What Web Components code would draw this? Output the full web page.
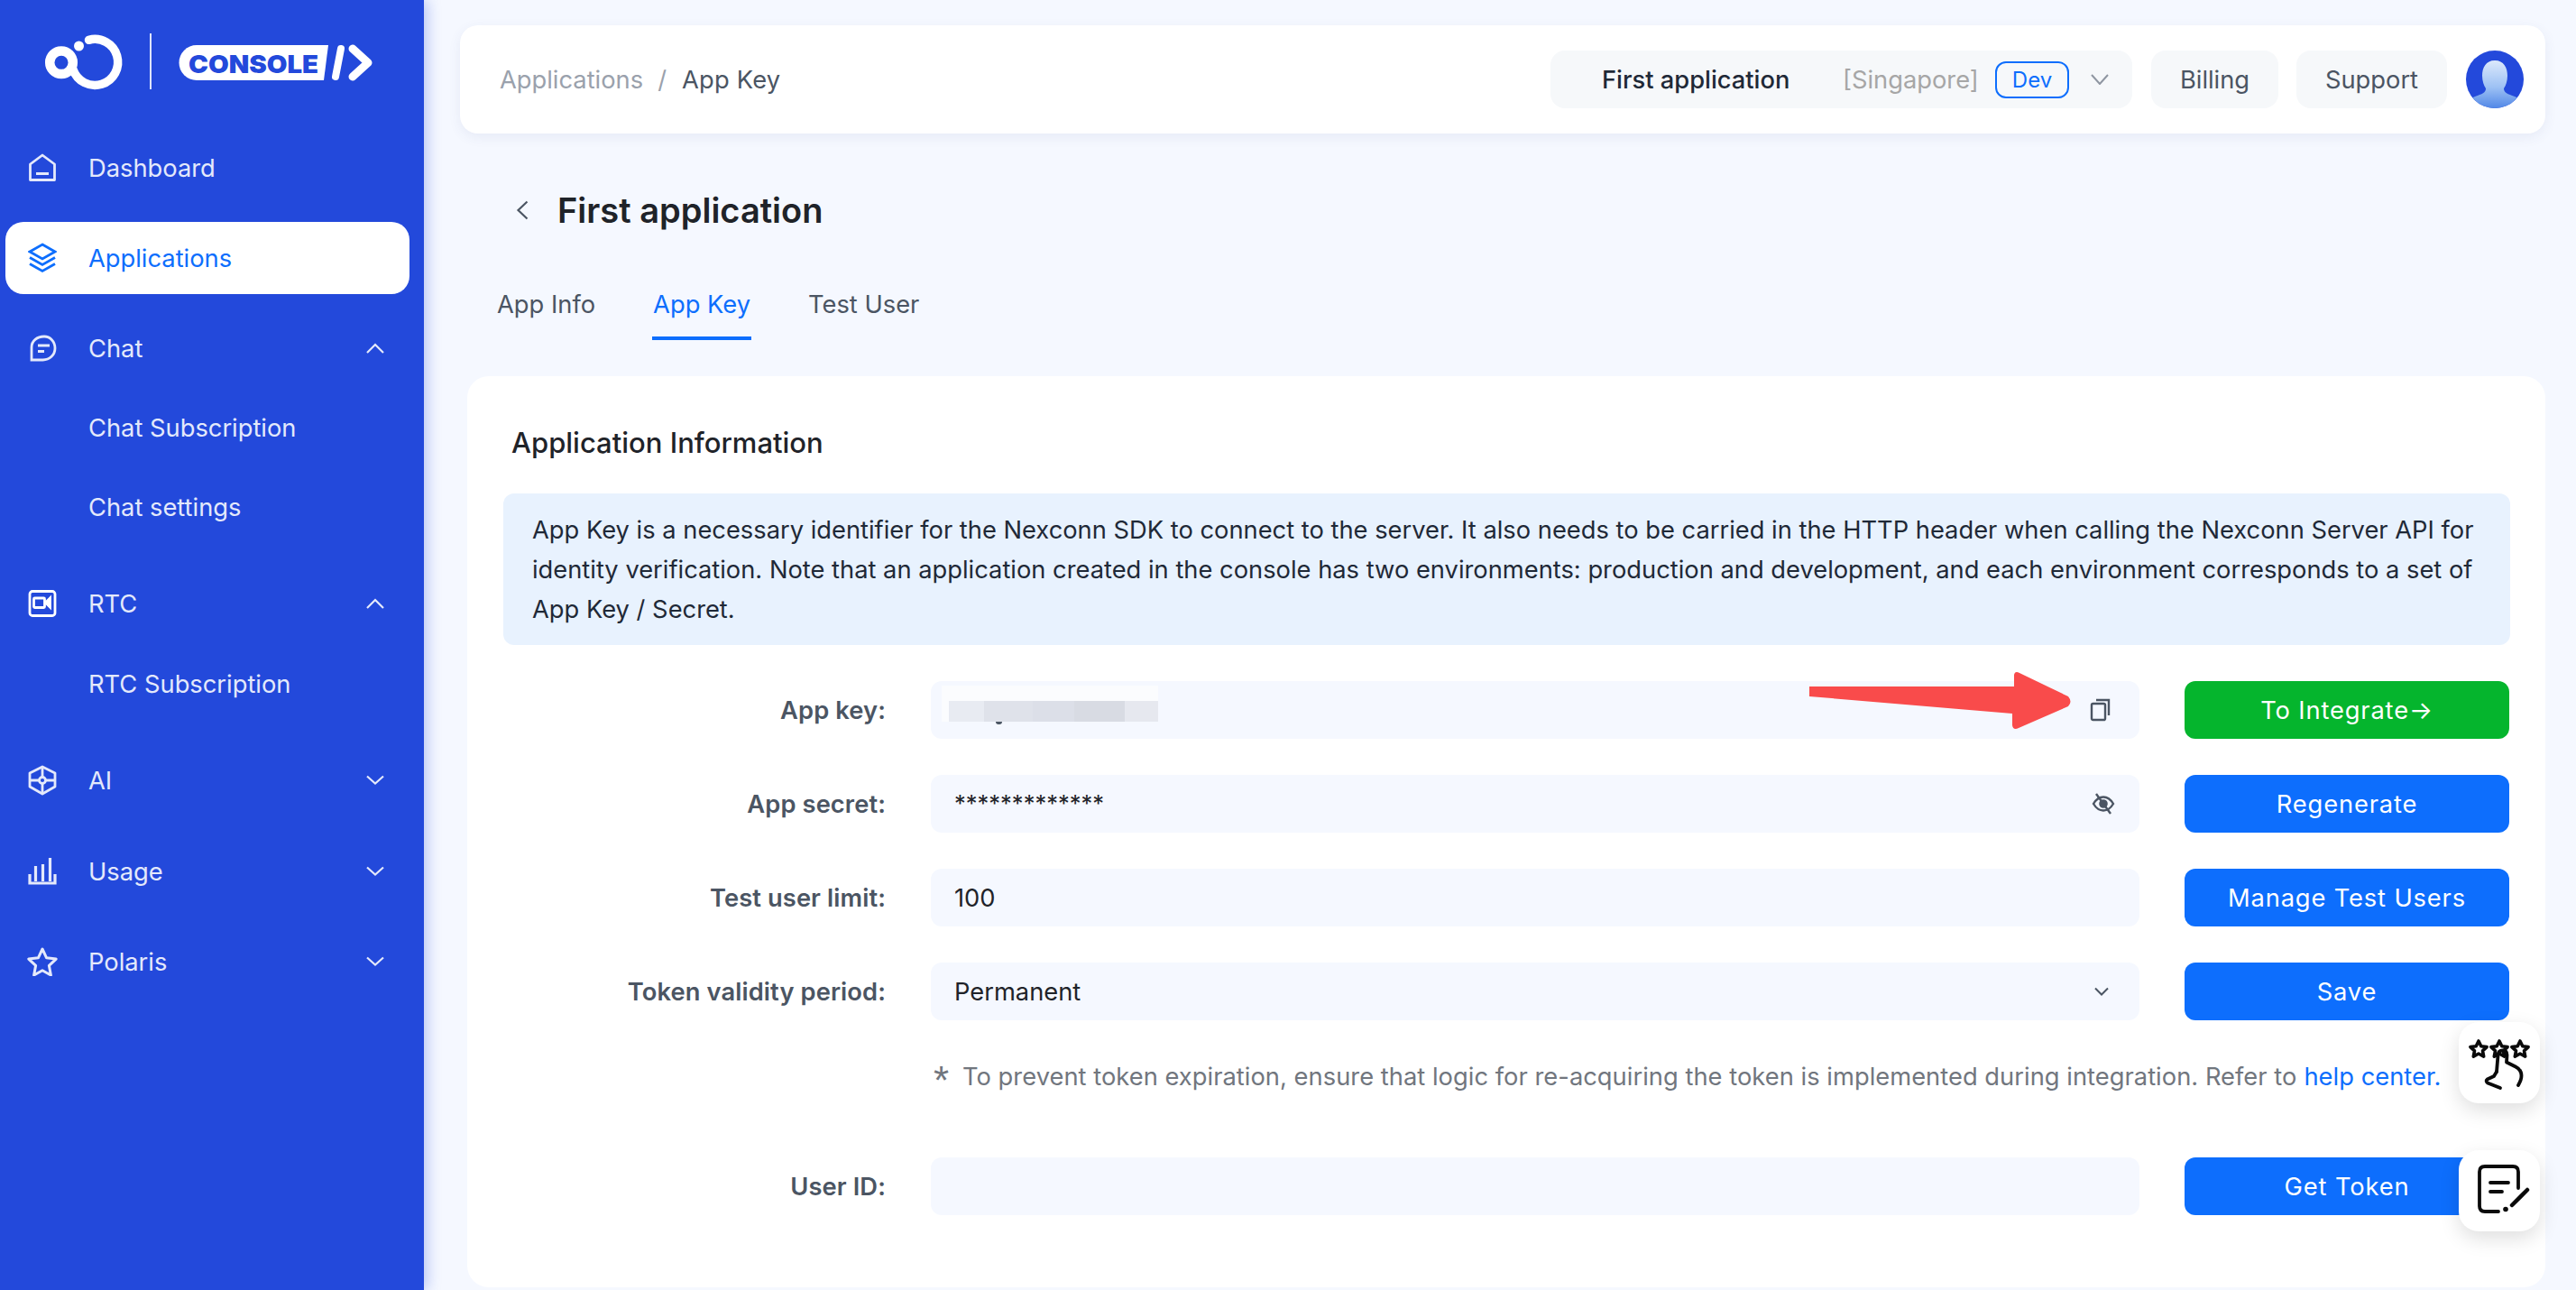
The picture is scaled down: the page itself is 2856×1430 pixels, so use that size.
<!DOCTYPE html>
<html lang="en">
<head>
<meta charset="utf-8">
<title>Console</title>
<style>
  html, body { margin: 0; height: 100%; }
  body { background: #f5f8ff; font-family: Inter, "Liberation Sans", sans-serif; overflow: hidden; }
</style>
</head>
<body>
<app-shell>
  <side-bar slot="side"></side-bar>
  <top-bar></top-bar>
  <page-head title-text="First application"></page-head>
  <tab-bar></tab-bar>
  <info-card heading="Application Information">
    <span slot="notice">App Key is a necessary identifier for the Nexconn SDK to connect to the server. It also needs to be carried in the HTTP header when calling the Nexconn Server API for identity verification. Note that an application created in the console has two environments: production and development, and each environment corresponds to a set of App Key / Secret.</span>

    <form-row label="App key:">
      <field-box>
        <redact-mask></redact-mask>
        <svg slot="end" width="24" height="26" viewBox="0 0 24 26" fill="none" stroke="#4b5563" stroke-width="2.400"><rect x="2" y="6" width="15" height="18" rx="1.600"/><path d="M7 2h14v17"/></svg>
      </field-box>
      <ui-button slot="action" kind="green">To Integrate→</ui-button>
    </form-row>

    <form-row label="App secret:">
      <field-box><span class="stars">*************</span>
        <svg slot="end" width="26" height="26" viewBox="0 0 26 26" fill="none" stroke="#4b5563" stroke-width="2.400" style="margin-right:-4px"><path d="M2 13c3-5 7-7.500 11-7.500S21 8 24 13c-3 5-7 7.500-11 7.500S5 18 2 13z"/><circle cx="13" cy="13" r="3.600" fill="#4b5563"/><path d="M5 2l16 22"/></svg>
      </field-box>
      <ui-button slot="action">Regenerate</ui-button>
    </form-row>

    <form-row label="Test user limit:">
      <field-box>100</field-box>
      <ui-button slot="action">Manage Test Users</ui-button>
    </form-row>

    <form-row label="Token validity period:">
      <field-box>Permanent
        <svg slot="end" width="20" height="12" viewBox="0 0 20 12" fill="none" stroke="#4b5563" stroke-width="2" style="margin-right:1px"><path d="M3 2.500l7 7 7-7"/></svg>
      </field-box>
      <ui-button slot="action">Save</ui-button>
    </form-row>

    <hint-line>To prevent token expiration, ensure that logic for re-acquiring the token is implemented during integration. Refer to <a slot="link">help center.</a></hint-line>

    <form-row label="User ID:">
      <field-box></field-box>
      <ui-button slot="action">Get Token</ui-button>
    </form-row>
  </info-card>
  <red-arrow></red-arrow>
  <float-button style="top:1133px">
    <svg width="90" height="90" viewBox="0 0 90 90" fill="none" stroke="#0a0a0a" stroke-width="3.600" stroke-linecap="round" stroke-linejoin="round">
      <path d="M22 21l2.800 5.800 6.300.8-4.600 4.300 1.200 6.200-5.700-3.100-5.700 3.100 1.200-6.200-4.600-4.300 6.300-.8z"/>
      <path d="M45 21l2.800 5.800 6.300.8-4.600 4.300 1.200 6.200-5.700-3.100-5.700 3.100 1.200-6.200-4.600-4.300 6.300-.8z"/>
      <path d="M68 21l2.800 5.800 6.300.8-4.600 4.300 1.200 6.200-5.700-3.100-5.700 3.100 1.200-6.200-4.600-4.300 6.300-.8z"/>
      <path d="M42 55l1.500-18c.3-4 2-5.500 5-5.500s5 1.800 5 5l-.5 8 10 5c4 2 6.500 6 6.500 10 0 4-1.500 7-3.500 10.500" stroke-width="3.800"/>
      <path d="M42 55l-3 5-7.500 3.500c-1.500 1-1 3 .5 4L46 73" stroke-width="3.800"/>
    </svg>
  </float-button>
  <float-button style="top:1275px">
    <svg width="90" height="90" viewBox="0 0 90 90" fill="none" stroke="#0a0a0a" stroke-width="3.800" stroke-linecap="round" stroke-linejoin="round">
      <path d="M66 42V24q0-6-6-6H29q-6 0-6 6v38q0 6 6 6h15"/>
      <path d="M35 36h20M35 46h13"/>
      <circle cx="52" cy="65.500" r="2.800" fill="#0a0a0a" stroke="none"/>
      <path d="M59 61l17-17" stroke-width="4.500"/>
    </svg>
  </float-button>
</app-shell>

<script>
const make = (html) => { const t = document.createElement('template'); t.innerHTML = html; return t; };

class Base extends HTMLElement {
  constructor() {
    super();
    this.attachShadow({ mode: 'open' });
    this.shadowRoot.appendChild(this.constructor.tpl.content.cloneNode(true));
  }
}

class AppShell extends Base {
  static tpl = make(`
    <style>
      :host { display: flex; position: relative; width: 2856px; height: 1430px; overflow: hidden; }
      .main { flex: 1; min-width: 0; padding: 28px 34px 0 40px; display: flex; flex-direction: column; }
    </style>
    <slot name="side"></slot>
    <div class="main"><slot></slot></div>
  `);
}

class SideBar extends Base {
  static tpl = make(`
    <style>
      :host { display: block; flex: 0 0 470px; height: 1430px; background: #2349db; box-shadow: 4px 0 14px rgba(35,73,219,.28); position: relative; z-index: 2; }
      .logo { height: 146px; display: block; }
      .logo svg { display: block; }
      nav { display: flex; flex-direction: column; }
      .g20 { margin-top: 20px; }
      .g4 { margin-top: 4px; }
      .g23 { margin-top: 23px; }
      .g5 { margin-top: 5px; }
    </style>
    <div class="logo">
      <svg width="470" height="146" viewBox="0 0 470 146">
        <circle cx="68" cy="69.300" r="12.800" fill="none" stroke="#fff" stroke-width="10.500"/>
        <path d="M98.500 44.300A25.500 25.500 0 1 1 81 77" fill="none" stroke="#fff" stroke-width="9.500" stroke-linecap="round"/>
        <circle cx="87.500" cy="51" r="5.500" fill="#fff"/>
        <rect x="166" y="37" width="2" height="62" fill="#fff" opacity=".85"/>
        <path d="M218 50H364l-5 39H218a19.500 19.500 0 0 1 0-39z" fill="#fff"/>
        <text x="209" y="80.500" font-family="Inter, 'Liberation Sans', sans-serif" font-weight="900" font-size="27.500" fill="#2349db" textLength="144" lengthAdjust="spacingAndGlyphs">CONSOLE</text>
        <path d="M378 54l-6 31" stroke="#fff" stroke-width="8" stroke-linecap="round" fill="none"/>
        <path d="M391 54l17 15.500-17 15.500" stroke="#fff" stroke-width="9" stroke-linecap="round" stroke-linejoin="round" fill="none"/>
      </svg>
    </div>
    <nav>
      <nav-item label="Dashboard">
        <svg width="32" height="32" viewBox="0 0 32 32" fill="none" stroke="currentColor" stroke-width="2.800"><path d="M2.500 12L16 2l13.500 10v17.500h-27z" stroke-linejoin="round"/><path d="M9 22.500h14" stroke-width="3"/></svg>
      </nav-item>
      <nav-item class="g20" label="Applications" active>
        <svg width="32" height="34" viewBox="0 0 32 34" fill="none" stroke="currentColor" stroke-width="2.800"><path d="M16 2L30 10 16 18 2 10z"/><path d="M2 16.500l14 8 14-8"/><path d="M2 23.500l14 8 14-8"/></svg>
      </nav-item>
      <nav-item class="g20" label="Chat" arrow="up">
        <svg width="32" height="32" viewBox="0 0 32 32" fill="none" stroke="currentColor" stroke-width="2.800"><path d="M18 3c6.500 0 12 5.500 12 13s-6 13-13.500 13H4V15C4 8 10 3 18 3z"/><path d="M11 13h13M11 19.500h7"/></svg>
      </nav-item>
      <div class="g4">
        <nav-sub>Chat Subscription</nav-sub>
        <nav-sub>Chat settings</nav-sub>
      </div>
      <nav-item class="g23" label="RTC" arrow="up">
        <svg width="32" height="32" viewBox="0 0 32 32" fill="none" stroke="#fff" stroke-width="2.800"><rect x="2" y="2.500" width="28" height="27" rx="3"/><rect x="6.500" y="10" width="12" height="10.500" rx="1"/><path d="M24.500 10l-5 5 5 5z" fill="#fff"/></svg>
      </nav-item>
      <div class="g5"><nav-sub>RTC Subscription</nav-sub></div>
      <nav-item class="g23" label="AI" arrow="down">
        <svg width="32" height="34" viewBox="0 0 32 34" fill="none" stroke="currentColor" stroke-width="2.800"><path d="M16 2l14 7v15l-14 8-14-8V9z" stroke-linejoin="round"/><circle cx="16" cy="17" r="3.500"/><path d="M16 2v11M16 21v11M2 17h10M20 17h10"/></svg>
      </nav-item>
      <nav-item class="g20" label="Usage" arrow="down" style="margin-top:21px">
        <svg width="32" height="32" viewBox="0 0 32 32" fill="none" stroke="currentColor" stroke-width="3.200"><path d="M2 19v10h28v-10"/><path d="M8.500 10v17M16.500 8v19M24.500 1v26"/></svg>
      </nav-item>
      <nav-item class="g20" label="Polaris" arrow="down">
        <svg width="34" height="32" viewBox="0 0 34 32" fill="none" stroke="currentColor" stroke-width="3" stroke-linejoin="round" style="margin-left:-1px;margin-right:-1px"><path d="M17 2l4.600 9.800 10.600 1.300-7.800 7.300 2 10.600-9.400-5.300-9.400 5.300 2-10.600L1.800 13.100l10.600-1.300z"/></svg>
      </nav-item>
    </nav>
  `);
}

class NavItem extends HTMLElement {
  constructor() {
    super();
    this.attachShadow({ mode: 'open' }).innerHTML = `
      <style>
        :host { display: flex; align-items: center; margin-left: 6px; width: 448px; height: 80px; box-sizing: border-box; padding: 0 28px 0 25px; border-radius: 20px; color: #e4e9fb; font-size: 27.300px; }
        :host([active]) { background: #fff; color: #0d6efd; }
        .ic { flex: 0 0 32px; width: 32px; height: 34px; display: flex; align-items: center; justify-content: center; margin-right: 35px; }
        .tx { flex: 1; }
        svg.ch { display: block; }
      </style>
      <span class="ic"><slot></slot></span>
      <span class="tx">${this.getAttribute('label')}</span>
      ${this.hasAttribute('arrow') ? `<svg class="ch" width="20" height="12" viewBox="0 0 20 12" fill="none" stroke="currentColor" stroke-width="2.200"><path d="${this.getAttribute('arrow') === 'up' ? 'M1 11l9-9 9 9' : 'M1 1.500l9 8 9-8'}"/></svg>` : ''}
    `;
  }
}

class NavSub extends Base {
  static tpl = make(`
    <style>:host { display: flex; align-items: center; height: 88px; padding-left: 98px; color: #e4e9fb; font-size: 27.300px; }</style>
    <slot></slot>
  `);
}

class TopBar extends Base {
  static tpl = make(`
    <style>
      :host { display: flex; align-items: center; height: 120px; box-sizing: border-box; padding: 0 24px 0 44px; background: #fff; border-radius: 20px; box-shadow: 0 4px 14px rgba(60,80,140,.08); font-size: 27.300px; flex: none; }
      .crumb { flex: 1; color: #9aa1ac; }
      .crumb .sep { margin: 0 17px 0 16px; color: #9aa1ac; }
      .crumb b { font-weight: 400; color: #4b5563; letter-spacing: .2px; }
      .pill { display: flex; align-items: center; justify-content: center; height: 64px; background: #f6f8fa; border-radius: 16px; color: #4b5563; }
      .app { width: 645px; box-sizing: border-box; justify-content: flex-start; margin-right: 21px; padding-left: 57px; }
      .app .name { width: 267px; color: #1f2937; font-weight: 500; }
      .app .reg { width: 169px; color: #a6a6a6; }
      .app .tag { box-sizing: border-box; height: 41px; width: 82px; border: 2px solid #0d6efd; border-radius: 12px; color: #0d6efd; font-size: 24px; display: flex; align-items: center; justify-content: center; margin-right: 24px; }
      .btn { width: 141px; margin-right: 20px; }
      .sup { width: 167px; margin-right: 21px; }
      .avatar { display: block; }
    </style>
    <div class="crumb">Applications<span class="sep">/</span><b>App Key</b></div>
    <div class="pill app">
      <span class="name">First application</span><span class="reg">[Singapore]</span><span class="tag">Dev</span>
      <svg width="20" height="12" viewBox="0 0 20 12" fill="none" stroke="#8f96a1" stroke-width="2"><path d="M1 1l9 10 9-10"/></svg>
    </div>
    <div class="pill btn">Billing</div>
    <div class="pill btn sup">Support</div>
    <svg class="avatar" width="64" height="64" viewBox="0 0 64 64">
      <defs>
        <linearGradient id="av" x1="0" y1="0" x2="0" y2="1"><stop offset="0" stop-color="#dce9fb"/><stop offset=".55" stop-color="#9dc1f4"/><stop offset="1" stop-color="#4e85e6"/></linearGradient>
        <clipPath id="avc"><circle cx="32" cy="32" r="32"/></clipPath>
      </defs>
      <g clip-path="url(#avc)">
        <rect width="64" height="64" fill="#2349db"/>
        <path d="M32 11c10 0 14 8 14 17 0 6-2 11-4 14 0 5 4 6 12 9 3 1 6 3 6 6v8H4v-8c0-3 3-5 6-6 8-3 12-4 12-9-2-3-4-8-4-14 0-9 4-17 14-17z" fill="url(#av)"/>
      </g>
    </svg>
  `);
}

class PageHead extends HTMLElement {
  constructor() {
    super();
    this.attachShadow({ mode: 'open' }).innerHTML = `
      <style>
        :host { display: flex; align-items: center; height: 60px; margin-top: 55px; padding-left: 62px; flex: none; color: #1f2329; font-size: 38px; font-weight: 600; }
        svg { margin-right: 32px; display: block; }
      </style>
      <svg width="14" height="22" viewBox="0 0 14 22" fill="none" stroke="#4b5563" stroke-width="2.200"><path d="M12.500 1.500L2.500 11l10 9.500"/></svg>
      <span>${this.getAttribute('title-text')}</span>
    `;
  }
}

class TabBar extends Base {
  static tpl = make(`
    <style>
      :host { display: flex; gap: 63px; height: 67px; margin-top: 47px; padding-left: 41px; flex: none; font-size: 27.300px; color: #4b5563; }
      div { box-sizing: border-box; height: 67px; padding-top: 11px; border-bottom: 4px solid transparent; }
      .on { color: #0d6efd; border-bottom-color: #0d6efd; padding-left: 1px; padding-right: 1px; }
    </style>
    <div>App Info</div>
    <div class="on">App Key</div>
    <div>Test User</div>
  `);
}

class InfoCard extends HTMLElement {
  constructor() {
    super();
    this.attachShadow({ mode: 'open' }).innerHTML = `
      <style>
        :host { display: block; margin: 40px 0 0 8px; height: 1010px; box-sizing: border-box; padding: 50px 39px 0 40px; background: #fff; border-radius: 24px; flex: none; }
        h2 { margin: 0 0 32px 9px; height: 48px; line-height: 48px; font-size: 31px; font-weight: 500; color: #1f2329; }
        .notice { box-sizing: border-box; height: 168px; padding: 19px 20px 0 32px; background: #e8f2fe; border-radius: 12px; font-size: 27.300px; line-height: 44px; color: #1f2937; margin-bottom: 40px; }
      </style>
      <h2>${this.getAttribute('heading')}</h2>
      <div class="notice"><slot name="notice"></slot></div>
      <slot></slot>
    `;
  }
}

class FormRow extends HTMLElement {
  constructor() {
    super();
    this.attachShadow({ mode: 'open' }).innerHTML = `
      <style>
        :host { display: grid; grid-template-columns: 424px 1340px 360px; column-gap: 50px; align-items: center; height: 64px; margin-bottom: 40px; font-size: 27.300px; }
        label { text-align: right; color: #4b5563; font-weight: 600; letter-spacing: .1px; }
      </style>
      <label>${this.getAttribute('label')}</label>
      <slot></slot>
      <slot name="action"></slot>
    `;
  }
}

class FieldBox extends Base {
  static tpl = make(`
    <style>
      :host { display: flex; align-items: center; position: relative; height: 64px; box-sizing: border-box; padding: 0 31px 0 26px; background: #f5f8ff; border-radius: 12px; color: #1f2329; font-size: 27.300px; }
      .v { flex: 1; }
      ::slotted(.stars) { font-size: 25.500px; position: relative; top: -1px; }
    </style>
    <span class="v"><slot></slot></span>
    <slot name="end"></slot>
  `);
}

class RedactMask extends Base {
  static tpl = make(`
    <style>
      :host { position: absolute; left: 12px; top: 5px; width: 240px; height: 40px; display: block; background: #fbfcfe; }
      div { position: absolute; left: 8px; right: 0; top: 17px; bottom: 0; background: linear-gradient(90deg, #e8ebf2 0 17%, #dfe2ea 17% 40%, #dcdfe8 40% 60%, #d8dbe3 60% 84%, #e6e8ef 84%); }
      i { position: absolute; left: 60px; top: 40px; width: 7px; height: 3px; background: #4b5563; border-radius: 0 0 4px 4px; }
    </style>
    <div></div><i></i>
  `);
}

class UiButton extends Base {
  static tpl = make(`
    <style>
      :host { display: flex; align-items: center; justify-content: center; height: 64px; background: #0d6efd; color: #fff; border-radius: 12px; font-size: 27.300px; letter-spacing: .85px; }
      :host([kind="green"]) { background: #05b52d; }
    </style>
    <slot></slot>
  `);
}

class HintLine extends Base {
  static tpl = make(`
    <style>
      :host { display: flex; align-items: center; height: 44px; margin: 0 0 68px 475px; color: #71767e; font-size: 27.300px; letter-spacing: .03px; white-space: nowrap; }
      .star { width: 34px; font: 300 44px/1 "Liberation Sans", sans-serif; position: relative; left: 2px; top: -3px; height: 28px; overflow: visible; }
      ::slotted(a) { color: #0d6efd; margin-left: 8px; }
    </style>
    <span class="star">*</span><slot></slot><slot name="link"></slot>
  `);
}

class RedArrow extends Base {
  static tpl = make(`
    <style>:host { position: absolute; left: 2006px; top: 744px; display: block; z-index: 3; }</style>
    <svg width="292" height="66" viewBox="0 0 292 66" style="display:block">
      <path d="M0 17L227 17V4Q228 -1 233 2L287 28Q292 34 287 39L232 63Q226 66 225 60V47L0 28z" fill="#f94b4b"/>
    </svg>
  `);
}

class FloatButton extends Base {
  static tpl = make(`
    <style>:host { position: absolute; left: 2726px; width: 90px; height: 90px; display: block; background: #fff; border-radius: 22px; box-shadow: 0 8px 22px rgba(0,0,0,.13); z-index: 4; }
    ::slotted(svg) { display: block; }</style>
    <slot></slot>
  `);
}

customElements.define('app-shell', AppShell);
customElements.define('side-bar', SideBar);
customElements.define('nav-item', NavItem);
customElements.define('nav-sub', NavSub);
customElements.define('top-bar', TopBar);
customElements.define('page-head', PageHead);
customElements.define('tab-bar', TabBar);
customElements.define('info-card', InfoCard);
customElements.define('form-row', FormRow);
customElements.define('field-box', FieldBox);
customElements.define('redact-mask', RedactMask);
customElements.define('ui-button', UiButton);
customElements.define('hint-line', HintLine);
customElements.define('red-arrow', RedArrow);
customElements.define('float-button', FloatButton);
</script>
</body>
</html>
